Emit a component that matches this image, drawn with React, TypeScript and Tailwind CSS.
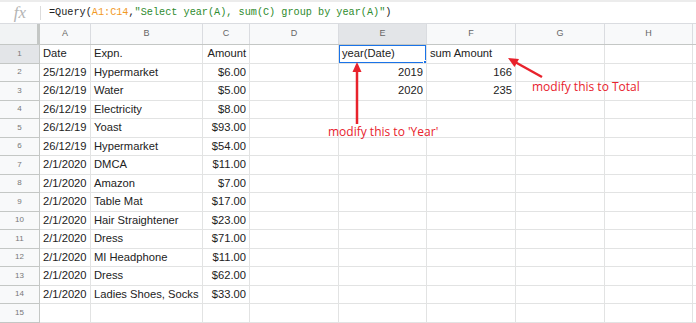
import React from 'react';

const COLS = 'grid grid-cols-[40px_51px_112px_47px_89px_88px_89px_89px_88px_1fr]';
const LETTERS = ['A', 'B', 'C', 'D', 'E', 'F', 'G', 'H'];

type Row = { a?: string; b?: string; c?: string; e?: string; f?: string };

const rows: Row[] = [
  { a: 'Date', b: 'Expn.', c: 'Amount', e: 'year(Date)', f: 'sum Amount' },
  { a: '25/12/19', b: 'Hypermarket', c: '$6.00', e: '2019', f: '166' },
  { a: '26/12/19', b: 'Water', c: '$5.00', e: '2020', f: '235' },
  { a: '26/12/19', b: 'Electricity', c: '$8.00' },
  { a: '26/12/19', b: 'Yoast', c: '$93.00' },
  { a: '26/12/19', b: 'Hypermarket', c: '$54.00' },
  { a: '2/1/2020', b: 'DMCA', c: '$11.00' },
  { a: '2/1/2020', b: 'Amazon', c: '$7.00' },
  { a: '2/1/2020', b: 'Table Mat', c: '$17.00' },
  { a: '2/1/2020', b: 'Hair Straightener', c: '$23.00' },
  { a: '2/1/2020', b: 'Dress', c: '$71.00' },
  { a: '2/1/2020', b: 'MI Headphone', c: '$11.00' },
  { a: '2/1/2020', b: 'Dress', c: '$62.00' },
  { a: '2/1/2020', b: 'Ladies Shoes, Socks', c: '$33.00' },
  {},
];

const cell = 'border-r border-b border-[#e2e3e3] px-[3px] flex items-center overflow-hidden whitespace-nowrap';

export default function App() {
  return (
    <div className="w-[696px] h-[323px] bg-white overflow-hidden relative font-['Liberation_Sans',Arial,sans-serif] text-[#222]">
      {/* formula bar */}
      <div className="h-[24px] border-t-2 border-[#ececec] border-b border-b-[#dadce0] flex items-center">
        <div className="w-[40px] flex items-center justify-center">
          <span className="font-['Liberation_Serif',serif] italic text-[17px] text-[#b4b4b4] leading-none">fx</span>
        </div>
        <div className="w-px h-[14px] bg-[#dcdcdc]" />
        <div className="pl-[8px] font-['Liberation_Mono',monospace] text-[10.2px] whitespace-nowrap">
          <span>=Query(</span>
          <span className="text-[#f29a1f]">A1:C14</span>
          <span>,</span>
          <span className="text-[#2e8b2e]">"Select year(A), sum(C) group by year(A)"</span>
          <span>)</span>
        </div>
      </div>

      {/* column headers */}
      <div className={`${COLS} h-[21px] bg-[#f8f9fa] border-b border-[#c4c7c5] text-[9px] text-[#666]`}>
        <div className="border-r-[3px] border-[#c4c7c5] bg-[#f1f3f4]" />
        {LETTERS.map((l) => (
          <div
            key={l}
            className={`border-r border-[#dadce0] flex items-center justify-center ${l === 'E' ? 'bg-[#e3e5e8]' : ''}`}
          >
            {l}
          </div>
        ))}
        <div />
      </div>

      {/* rows */}
      {rows.map((r, i) => (
        <div key={i} className={`${COLS} h-[18.5px] text-[11.2px]`}>
          <div
            className={`border-r border-b border-[#c4c7c5] flex items-center justify-center text-[8px] text-[#777] ${
              i === 0 ? 'bg-[#e3e5e8]' : 'bg-[#f8f9fa]'
            }`}
          >
            {i + 1}
          </div>
          <div className={cell}>{r.a}</div>
          <div className={cell}>{r.b}</div>
          <div className={`${cell} justify-end`}>{r.c}</div>
          <div className={cell} />
          <div className={`${cell} ${i > 0 ? 'justify-end' : ''} relative`}>
            {r.e}
            {i === 0 && (
              <>
                <div className="absolute inset-[-1px] border-2 border-[#1a73e8]" />
                <div className="absolute right-[-3px] bottom-[-3px] w-[6px] h-[6px] bg-[#1a73e8] border border-white" />
              </>
            )}
          </div>
          <div className={`${cell} ${i > 0 ? 'justify-end' : ''}`}>{r.f}</div>
          <div className={cell} />
          <div className={cell} />
          <div className="border-b border-[#e2e3e3]" />
        </div>
      ))}

      {/* annotations */}
      <svg className="absolute left-0 top-0 pointer-events-none" width="696" height="323">
        <line x1="357" y1="124" x2="357" y2="69" stroke="#e8222c" strokeWidth="2.5" />
        <polygon points="357,62 352.5,72 361.5,72" fill="#e8222c" />
        <line x1="542" y1="77" x2="515" y2="62" stroke="#e8222c" strokeWidth="2.5" />
        <polygon points="508,58 519,59 514.5,67" fill="#e8222c" />
      </svg>
      <div className="absolute left-[328px] top-[126px] font-['Open_Sans',sans-serif] text-[12px] text-[#e8222c] whitespace-nowrap leading-none">
        modify this to 'Year'
      </div>
      <div className="absolute left-[532px] top-[81px] font-['Open_Sans',sans-serif] text-[12px] text-[#e8222c] whitespace-nowrap leading-none">
        modify this to Total
      </div>
    </div>
  );
}
